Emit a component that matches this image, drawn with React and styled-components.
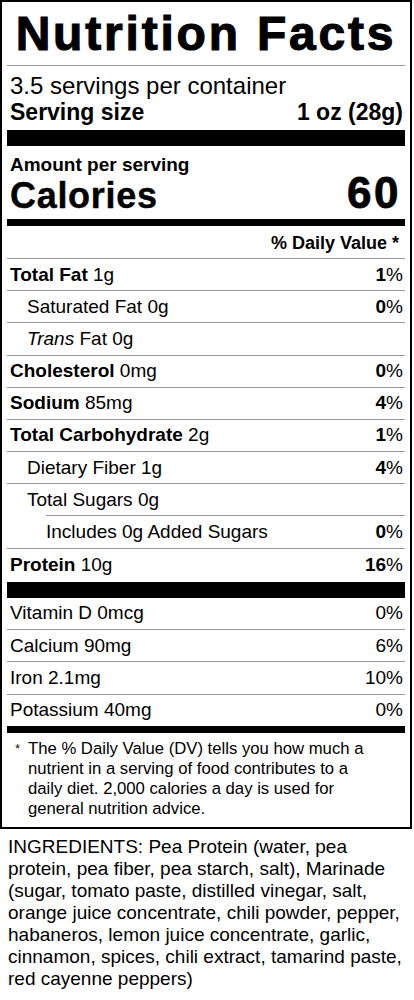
import React from 'react'
import styled, { createGlobalStyle } from 'styled-components'

const GlobalStyle = createGlobalStyle`
  body {
    margin: 0;
    background: #fff;
    color: #000;
    font-family: "Liberation Sans", Arial, sans-serif;
  }
`

const Page = styled.div`
  width: 414px;
`

const Label = styled.section`
  width: 412px;
  box-sizing: border-box;
  border: 2px solid #000;
  padding: 0 5px 8px;
`

const Title = styled.h1`
  margin: 0;
  font-size: 48px;
  font-weight: 900;
  line-height: 63px;
  text-align: center;
  letter-spacing: 2.8px;
  -webkit-text-stroke: 1.1px #000;
  border-bottom: 1px solid #999;
`

const Servings = styled.div`
  padding: 6.7px 2px 0 3px;
  font-size: 24px;
  line-height: 26px;
`

const ServingSize = styled.div`
  display: flex;
  justify-content: space-between;
  padding: 0 2px 0 3px;
  font-size: 23px;
  font-weight: 700;
  line-height: 26px;
`

const Bar = styled.div`
  height: ${p => (p.$size === 'medium' ? 7 : 16)}px;
  margin-top: ${p => p.$gap || 0}px;
  background: #000;
`

const Amount = styled.div`
  padding: 7.4px 2px 0 3px;
  font-size: 19px;
  font-weight: 700;
  line-height: 22px;
`

const CaloriesRow = styled.div`
  display: flex;
  justify-content: space-between;
  align-items: baseline;
  padding: 0 4px 0 3px;
  font-weight: 700;
  line-height: 34px;
`

const CaloriesLabel = styled.span`
  font-size: 36px;
  letter-spacing: 0.7px;
  -webkit-text-stroke: 0.4px #000;
`

const CaloriesValue = styled.span`
  font-size: 44px;
  letter-spacing: 2.5px;
  -webkit-text-stroke: 0.8px #000;
`

const DVHeader = styled.div`
  padding: 5.8px 6px 4.2px 3px;
  text-align: right;
  font-size: 18px;
  font-weight: 700;
  line-height: 22px;
`

const Rule = styled.div`
  height: 1px;
  margin-left: ${p => p.$indent || 0}px;
  background: #9a9a9a;
`

const Row = styled.div`
  display: flex;
  align-items: center;
  justify-content: space-between;
  height: ${p => p.$h || 31.2}px;
  padding: 0 2px 0 ${p => 3 + (p.$indent || 0)}px;
  font-size: 19px;
`

const Name = styled.span`
  font-weight: 700;
`

const Pct = styled.span`
  b {
    font-weight: 700;
  }
`

const Footnote = styled.div`
  display: flex;
  padding: 6px 30px 0 0;
  font-size: 16.7px;
  line-height: 20px;
`

const Star = styled.span`
  flex: 0 0 21px;
  font-size: 12px;
  text-align: center;
`

const Ingredients = styled.p`
  margin: 0;
  padding: 7px 8px 0;
  font-size: 19px;
  line-height: 22px;
`

const nutrients = [
  { name: 'Total Fat', amount: '1g', pct: '1', bold: true },
  { name: 'Saturated Fat', amount: '0g', pct: '0', indent: 17 },
  { name: 'Trans', amount: 'Fat 0g', indent: 17, italic: true },
  { name: 'Cholesterol', amount: '0mg', pct: '0', bold: true },
  { name: 'Sodium', amount: '85mg', pct: '4', bold: true },
  { name: 'Total Carbohydrate', amount: '2g', pct: '1', bold: true },
  { name: 'Dietary Fiber', amount: '1g', pct: '4', indent: 17 },
  { name: 'Total Sugars', amount: '0g', indent: 17, ruleIndent: 39 },
  { name: 'Includes 0g Added Sugars', amount: '', pct: '0', indent: 36 },
]

const vitamins = [
  { name: 'Vitamin D 0mcg', pct: '0%' },
  { name: 'Calcium 90mg', pct: '6%' },
  { name: 'Iron 2.1mg', pct: '10%' },
  { name: 'Potassium 40mg', pct: '0%' },
]

function NutrientName({ item }) {
  if (item.bold) return <span><Name>{item.name}</Name> {item.amount}</span>
  if (item.italic) return <span><i>{item.name}</i> {item.amount}</span>
  return <span>{item.name}{item.amount ? ' ' + item.amount : ''}</span>
}

export default function App() {
  return (
    <Page>
      <GlobalStyle />
      <Label>
        <Title>Nutrition Facts</Title>
        <Servings>3.5 servings per container</Servings>
        <ServingSize>
          <span>Serving size</span>
          <span>1 oz (28g)</span>
        </ServingSize>
        <Bar $gap={5.7} />
        <Amount>Amount per serving</Amount>
        <CaloriesRow>
          <CaloriesLabel>Calories</CaloriesLabel>
          <CaloriesValue>60</CaloriesValue>
        </CaloriesRow>
        <Bar $size="medium" $gap={6.2} />
        <DVHeader>% Daily Value *</DVHeader>
        <Rule />
        {nutrients.map(item => (
          <React.Fragment key={item.name}>
            <Row $indent={item.indent}>
              <NutrientName item={item} />
              {item.pct && <Pct><b>{item.pct}</b>%</Pct>}
            </Row>
            <Rule $indent={item.ruleIndent} />
          </React.Fragment>
        ))}
        <Row $h={33.2}>
          <span><Name>Protein</Name> 10g</span>
          <Pct><b>16</b>%</Pct>
        </Row>
        <Bar />
        {vitamins.map((v, i) => (
          <React.Fragment key={v.name}>
            <Row $h={31.3}>
              <span>{v.name}</span>
              <span>{v.pct}</span>
            </Row>
            {i < vitamins.length - 1 && <Rule />}
          </React.Fragment>
        ))}
        <Bar $size="medium" />
        <Footnote>
          <Star>*</Star>
          <span>
            The % Daily Value (DV) tells you how much a nutrient in a serving of
            food contributes to a daily diet. 2,000 calories a day is used for
            general nutrition advice.
          </span>
        </Footnote>
      </Label>
      <Ingredients>
        INGREDIENTS: Pea Protein (water, pea protein, pea fiber, pea starch,
        salt), Marinade (sugar, tomato paste, distilled vinegar, salt, orange
        juice concentrate, chili powder, pepper, habaneros, lemon juice
        concentrate, garlic, cinnamon, spices, chili extract, tamarind paste,
        red cayenne peppers)
      </Ingredients>
    </Page>
  )
}
